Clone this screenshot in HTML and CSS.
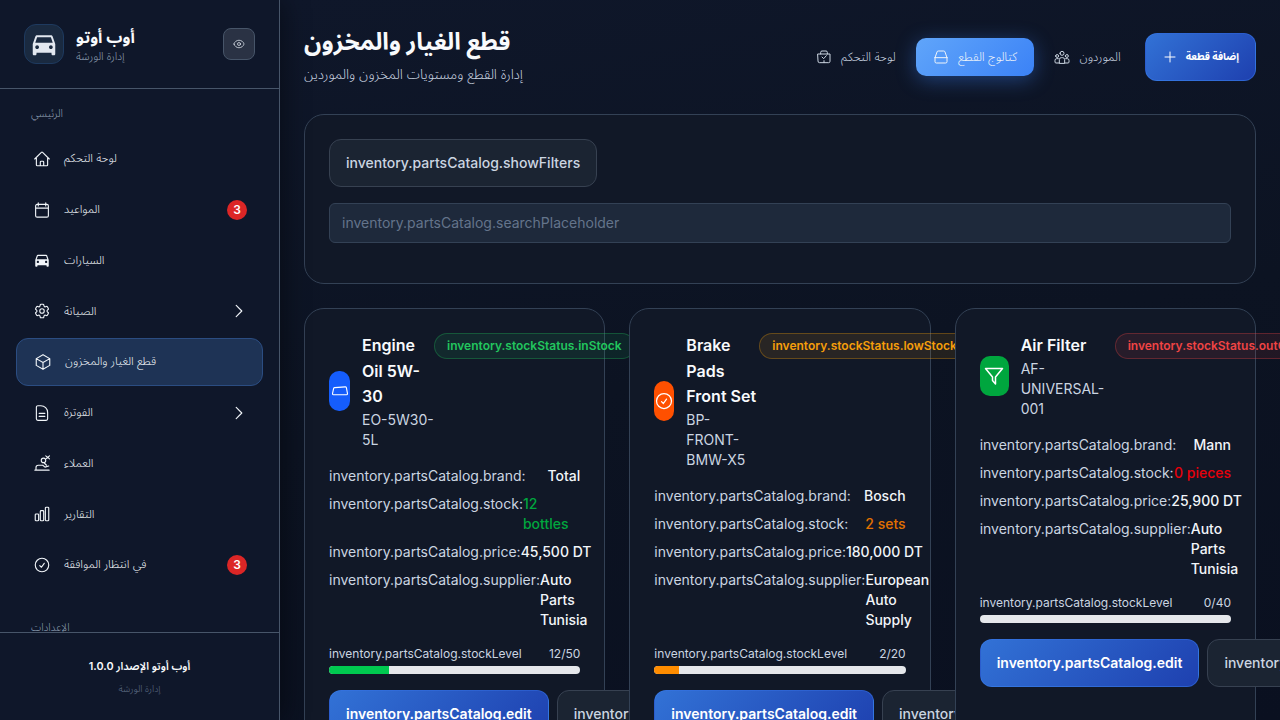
FILE: index.html
```html
<!DOCTYPE html>
<html lang="ar">
<head>
  <meta charset="UTF-8">
  <meta name="viewport" content="width=device-width, initial-scale=1.0">
  <title>قطع الغيار والمخزون</title>
  <link rel="stylesheet" href="styles.css">
</head>
<body>
  <svg class="sprite" aria-hidden="true">
    <symbol id="i-home" viewBox="0 0 24 24"><path d="m2.25 12 8.954-8.955c.44-.439 1.152-.439 1.591 0L21.75 12M4.5 9.75v10.125c0 .621.504 1.125 1.125 1.125H9.75v-4.875c0-.621.504-1.125 1.125-1.125h2.25c.621 0 1.125.504 1.125 1.125V21h4.125c.621 0 1.125-.504 1.125-1.125V9.75M8.25 21h8.25"/></symbol>
    <symbol id="i-calendar" viewBox="0 0 24 24"><path d="M7 2.5v4M17 2.5v4M3.5 9.5h17M5.5 4.5h13a2 2 0 0 1 2 2v13a2 2 0 0 1-2 2h-13a2 2 0 0 1-2-2v-13a2 2 0 0 1 2-2Z"/></symbol>
    <symbol id="i-car" viewBox="0 0 24 24"><path class="solid" d="M18.92 6.01C18.72 5.42 18.16 5 17.5 5h-11c-.66 0-1.21.42-1.42 1.01L3 12v8c0 .55.45 1 1 1h1c.55 0 1-.45 1-1v-1h12v1c0 .55.45 1 1 1h1c.55 0 1-.45 1-1v-8l-2.08-5.99zM6.5 16c-.83 0-1.5-.67-1.5-1.5S5.67 13 6.5 13s1.5.67 1.5 1.5S7.33 16 6.5 16zm11 0c-.83 0-1.5-.67-1.5-1.5s.67-1.5 1.5-1.5 1.5.67 1.5 1.5-.67 1.5-1.5 1.5zM5 11l1.5-4.5h11L19 11H5z"/></symbol>
    <symbol id="i-gear" viewBox="0 0 24 24"><path d="M9.594 3.94c.09-.542.56-.94 1.11-.94h2.593c.55 0 1.02.398 1.11.94l.213 1.281c.063.374.313.686.645.87.074.04.147.083.22.127.325.196.72.257 1.075.124l1.217-.456a1.125 1.125 0 0 1 1.37.49l1.296 2.247a1.125 1.125 0 0 1-.26 1.431l-1.003.827c-.293.241-.438.613-.43.992a7.723 7.723 0 0 1 0 .255c-.008.378.137.75.43.991l1.004.827c.424.35.534.955.26 1.43l-1.298 2.247a1.125 1.125 0 0 1-1.369.491l-1.217-.456c-.355-.133-.75-.072-1.076.124a6.47 6.47 0 0 1-.22.128c-.331.183-.581.495-.644.869l-.213 1.281c-.09.543-.56.94-1.11.94h-2.594c-.55 0-1.019-.398-1.11-.94l-.213-1.281c-.062-.374-.312-.686-.644-.87a6.52 6.52 0 0 1-.22-.127c-.325-.196-.72-.257-1.076-.124l-1.217.456a1.125 1.125 0 0 1-1.369-.49l-1.297-2.247a1.125 1.125 0 0 1 .26-1.431l1.004-.827c.292-.24.437-.613.43-.991a6.932 6.932 0 0 1 0-.255c.007-.38-.138-.751-.43-.992l-1.004-.827a1.125 1.125 0 0 1-.26-1.43l1.297-2.247a1.125 1.125 0 0 1 1.37-.491l1.216.456c.356.133.751.072 1.076-.124.072-.044.146-.086.22-.128.332-.183.582-.495.644-.869l.214-1.28Z"/><path d="M15 12a3 3 0 1 1-6 0 3 3 0 0 1 6 0Z"/></symbol>
    <symbol id="i-cube" viewBox="0 0 24 24"><path d="m21 7.5-9-5.25L3 7.5m18 0-9 5.25m9-5.25v9l-9 5.25M3 7.5l9 5.25M3 7.5v9l9 5.25m0-9v9"/></symbol>
    <symbol id="i-doc" viewBox="0 0 24 24"><path d="M8.25 12.5h7.5m-7.5 4h7.5M10.5 2.25H6.5a2 2 0 0 0-2 2v15.5a2 2 0 0 0 2 2h11a2 2 0 0 0 2-2v-8.5a9 9 0 0 0-9-9Z"/></symbol>
    <symbol id="i-clients" viewBox="0 0 24 24"><path d="M2.5 21.5h19M4 21.5v-3.5a3 3 0 0 1 3-3h6l3 2.500 5-1.500M11 8.500a3 3 0 1 1 6 0 3 3 0 0 1-6 0ZM15 12l3 3M17 2.500l5 4M22 2.500l-4 3.500"/></symbol>
    <symbol id="i-chart" viewBox="0 0 24 24"><path d="M3 13.125C3 12.504 3.504 12 4.125 12h2.25c.621 0 1.125.504 1.125 1.125v6.75C7.5 20.496 6.996 21 6.375 21h-2.25A1.125 1.125 0 0 1 3 19.875v-6.75ZM9.750 8.625c0-.621.504-1.125 1.125-1.125h2.250c.621 0 1.125.504 1.125 1.125v11.250c0 .621-.504 1.125-1.125 1.125h-2.250a1.125 1.125 0 0 1-1.125-1.125V8.625ZM16.500 4.125c0-.621.504-1.125 1.125-1.125h2.250C20.496 3 21 3.504 21 4.125v15.750c0 .621-.504 1.125-1.125 1.125h-2.250a1.125 1.125 0 0 1-1.125-1.125V4.125Z"/></symbol>
    <symbol id="i-check" viewBox="0 0 24 24"><path d="M9 12.750 11.250 15 15 9.750M21 12a9 9 0 1 1-18 0 9 9 0 0 1 18 0Z"/></symbol>
    <symbol id="i-chevron" viewBox="0 0 24 24"><path d="m8.250 4.500 7.500 7.500-7.500 7.500"/></symbol>
    <symbol id="i-eye" viewBox="0 0 24 24"><path d="M2.036 12.322a1.012 1.012 0 0 1 0-.639C3.423 7.510 7.360 4.500 12 4.500c4.638 0 8.573 3.007 9.963 7.178.07.207.07.431 0 .639C20.577 16.490 16.640 19.500 12 19.500c-4.638 0-8.573-3.007-9.963-7.178Z"/><path d="M15 12a3 3 0 1 1-6 0 3 3 0 0 1 6 0Z"/></symbol>
    <symbol id="i-plus" viewBox="0 0 24 24"><path d="M12 4.500v15m7.500-7.500h-15"/></symbol>
    <symbol id="i-box" viewBox="0 0 24 24"><path d="M3 13v6a2 2 0 0 0 2 2h14a2 2 0 0 0 2-2v-6M3 13l3-8.500a2 2 0 0 1 2-1.500h8a2 2 0 0 1 2 1.500l3 8.500M3 13h18"/></symbol>
    <symbol id="i-users" viewBox="0 0 24 24"><path d="M9 6.500a3 3 0 1 1 6 0 3 3 0 0 1-6 0ZM2.500 10.500a2.200 2.200 0 1 1 4.400 0 2.200 2.200 0 0 1-4.400 0ZM17.100 10.500a2.200 2.200 0 1 1 4.400 0 2.200 2.200 0 0 1-4.400 0ZM8 21v-5a3 3 0 0 1 3-3h2a3 3 0 0 1 3 3v5ZM8 21H3a1.500 1.500 0 0 1-1.500-1.500V17a2.500 2.500 0 0 1 2.500-2.500h2.500M16 21h5a1.500 1.500 0 0 0 1.500-1.500V17a2.500 2.500 0 0 0-2.500-2.500h-2.500"/></symbol>
    <symbol id="i-panel" viewBox="0 0 24 24"><path d="M3 7.500h18v11a2 2 0 0 1-2 2H5a2 2 0 0 1-2-2ZM7 7.500V5a2 2 0 0 1 2-2h6a2 2 0 0 1 2 2v2.500M9 12l2.500 2.500L15.500 10M12 20.500v-3"/></symbol>
    <symbol id="i-oil" viewBox="0 0 24 24"><path d="M5 7.500 19 6.500a1.500 1.500 0 0 1 1.500 1L22 15.500a1.500 1.500 0 0 1-1.500 1.500h-17A1.500 1.500 0 0 1 2 15.500l1.500-7A1.500 1.500 0 0 1 5 7.500Z"/></symbol>
    <symbol id="i-funnel" viewBox="0 0 24 24"><path d="M3.500 4.500h17l-7 8.500v7l-3-3.500V13Z"/></symbol>
  </svg>

  <div class="app">
    <aside class="sidebar">
      <div class="brand">
        <div class="brand-logo"><svg class="icon"><use href="#i-car"/></svg></div>
        <div class="brand-text">
          <div class="brand-name">أوب أوتو</div>
          <div class="brand-sub">إدارة الورشة</div>
        </div>
        <button class="theme-btn" type="button"><svg class="icon"><use href="#i-eye"/></svg></button>
      </div>

      <nav class="side-nav">
        <div class="nav-label">الرئيسي</div>
        <a class="nav-item"><svg class="icon"><use href="#i-home"/></svg><span>لوحة التحكم</span></a>
        <a class="nav-item"><svg class="icon"><use href="#i-calendar"/></svg><span>المواعيد</span><b class="count">3</b></a>
        <a class="nav-item"><svg class="icon"><use href="#i-car"/></svg><span>السيارات</span></a>
        <a class="nav-item"><svg class="icon"><use href="#i-gear"/></svg><span>الصيانة</span><svg class="icon chevron"><use href="#i-chevron"/></svg></a>
        <a class="nav-item active"><svg class="icon"><use href="#i-cube"/></svg><span>قطع الغيار والمخزون</span></a>
        <a class="nav-item"><svg class="icon"><use href="#i-doc"/></svg><span>الفوترة</span><svg class="icon chevron"><use href="#i-chevron"/></svg></a>
        <a class="nav-item"><svg class="icon"><use href="#i-clients"/></svg><span>العملاء</span></a>
        <a class="nav-item"><svg class="icon"><use href="#i-chart"/></svg><span>التقارير</span></a>
        <a class="nav-item"><svg class="icon"><use href="#i-check"/></svg><span>في انتظار الموافقة</span><b class="count">3</b></a>
        <div class="nav-label second">الإعدادات</div>
      </nav>

      <div class="side-footer">
        <div class="version">أوب أوتو الإصدار 1.0.0</div>
        <div class="version-sub">إدارة الورشة</div>
      </div>
    </aside>

    <main class="main">
      <header class="page-head">
        <div class="page-title">
          <h1>قطع الغيار والمخزون</h1>
          <p>إدارة القطع ومستويات المخزون والموردين</p>
        </div>
        <div class="head-actions">
          <a class="tab"><svg class="icon"><use href="#i-panel"/></svg>لوحة التحكم</a>
          <a class="tab current"><svg class="icon"><use href="#i-box"/></svg>كتالوج القطع</a>
          <a class="tab"><svg class="icon"><use href="#i-users"/></svg>الموردون</a>
          <button class="add-btn" type="button"><svg class="icon"><use href="#i-plus"/></svg>إضافة قطعة</button>
        </div>
      </header>

      <section class="panel filters">
        <button class="btn-ghost" type="button">inventory.partsCatalog.showFilters</button>
        <input class="search" type="text" placeholder="inventory.partsCatalog.searchPlaceholder">
      </section>

      <section class="parts">
        <article class="panel part">
          <div class="part-head">
            <div class="part-title t-oil">
              <div class="part-icon blue"><svg class="icon"><use href="#i-oil"/></svg></div>
              <div class="part-name">
                <h3>Engine Oil 5W-30</h3>
                <div class="sku">EO-5W30-5L</div>
              </div>
            </div>
            <span class="status ok">inventory.stockStatus.inStock</span>
          </div>
          <div class="row"><span>inventory.partsCatalog.brand:</span><strong>Total</strong></div>
          <div class="row"><span>inventory.partsCatalog.stock:</span><em class="green">12 bottles</em></div>
          <div class="row"><span>inventory.partsCatalog.price:</span><strong class="price">45,500 DT</strong></div>
          <div class="row"><span>inventory.partsCatalog.supplier:</span><strong>Auto Parts Tunisia</strong></div>
          <div class="level"><span>inventory.partsCatalog.stockLevel</span><span>12/50</span></div>
          <div class="bar"><div class="fill fill-green" style="width: 24%"></div></div>
          <div class="actions">
            <button class="btn-primary" type="button">inventory.partsCatalog.edit</button>
            <button class="btn-ghost" type="button">inventory.partsCatalog.details</button>
          </div>
        </article>

        <article class="panel part">
          <div class="part-head">
            <div class="part-title t-brake">
              <div class="part-icon orange"><svg class="icon"><use href="#i-check"/></svg></div>
              <div class="part-name">
                <h3>Brake Pads Front Set</h3>
                <div class="sku">BP-FRONT-BMW-X5</div>
              </div>
            </div>
            <span class="status low">inventory.stockStatus.lowStock</span>
          </div>
          <div class="row"><span>inventory.partsCatalog.brand:</span><strong>Bosch</strong></div>
          <div class="row"><span>inventory.partsCatalog.stock:</span><em class="amber">2 sets</em></div>
          <div class="row"><span>inventory.partsCatalog.price:</span><strong class="price">180,000 DT</strong></div>
          <div class="row"><span>inventory.partsCatalog.supplier:</span><strong>European Auto Supply</strong></div>
          <div class="level"><span>inventory.partsCatalog.stockLevel</span><span>2/20</span></div>
          <div class="bar"><div class="fill fill-amber" style="width: 10%"></div></div>
          <div class="actions">
            <button class="btn-primary" type="button">inventory.partsCatalog.edit</button>
            <button class="btn-ghost" type="button">inventory.partsCatalog.details</button>
          </div>
        </article>

        <article class="panel part">
          <div class="part-head">
            <div class="part-title t-filter">
              <div class="part-icon lime"><svg class="icon"><use href="#i-funnel"/></svg></div>
              <div class="part-name">
                <h3>Air Filter</h3>
                <div class="sku">AF-UNIVERSAL-001</div>
              </div>
            </div>
            <span class="status out">inventory.stockStatus.outOfStock</span>
          </div>
          <div class="row"><span>inventory.partsCatalog.brand:</span><strong>Mann</strong></div>
          <div class="row"><span>inventory.partsCatalog.stock:</span><em class="red">0 pieces</em></div>
          <div class="row"><span>inventory.partsCatalog.price:</span><strong class="price">25,900 DT</strong></div>
          <div class="row"><span>inventory.partsCatalog.supplier:</span><strong>Auto Parts Tunisia</strong></div>
          <div class="level"><span>inventory.partsCatalog.stockLevel</span><span>0/40</span></div>
          <div class="bar"><div class="fill" style="width: 0%"></div></div>
          <div class="actions">
            <button class="btn-primary" type="button">inventory.partsCatalog.edit</button>
            <button class="btn-ghost" type="button">inventory.partsCatalog.details</button>
          </div>
        </article>
      </section>
    </main>
  </div>
</body>
</html>
```

FILE: styles.css
```css
* {
  box-sizing: border-box;
}
html, body {
  height: 100%;
}
body {
  margin: 0;
  overflow: hidden;
  font-family: Inter, "Noto Sans Arabic", sans-serif;
  line-height: 1.6;
  color: #f8fafc;
  background: #0f172a;
}
.sprite {
  display: none;
}
.icon {
  width: 18px;
  height: 18px;
  flex: none;
  fill: none;
  stroke: currentColor;
  stroke-width: 1.5;
  stroke-linecap: round;
  stroke-linejoin: round;
}
.solid {
  fill: currentColor;
  stroke: none;
}
.app {
  display: flex;
  height: 720px;
  overflow: hidden;
}

/* Sidebar */
.sidebar {
  width: 280px;
  flex: none;
  display: flex;
  flex-direction: column;
  background: #0f172a;
  border-right: 1px solid #475569;
  box-shadow: 4px 0 24px rgba(0,0,0,0.4);
  z-index: 2;
}
.brand {
  height: 89px;
  flex: none;
  display: flex;
  align-items: center;
  gap: 12px;
  padding: 0 24px;
  border-bottom: 1px solid #475569;
}
.brand-logo {
  width: 40px;
  height: 40px;
  display: flex;
  align-items: center;
  justify-content: center;
  color: #e2e8f0;
  background: #1a2a40;
  border: 1px solid #1e3a5f;
  border-radius: 12px;
}
.brand-logo .icon {
  width: 30px;
  height: 30px;
}
.brand-text {
  flex: 1;
}
.brand-name {
  font-size: 16px;
  font-weight: 700;
  line-height: 24px;
}
.brand-sub {
  font-size: 11px;
  font-weight: 300;
  line-height: 14px;
  color: #94a3b8;
}
.theme-btn {
  width: 32px;
  height: 32px;
  padding: 0;
  display: flex;
  align-items: center;
  justify-content: center;
  color: #e2e8f0;
  background: #2a3244;
  border: 1px solid #475569;
  border-radius: 8px;
}
.theme-btn .icon {
  width: 12px;
  height: 12px;
}
.side-nav {
  flex: 1;
  min-height: 0;
  overflow: hidden;
  padding: 16px;
  display: flex;
  flex-direction: column;
  gap: 2.75px;
}
.nav-label {
  flex: none;
  padding: 0 15px;
  font-size: 10.5px;
  line-height: 18px;
  font-weight: 300;
  color: #94a3b8;
  margin-bottom: 9px;
}
.nav-label.second {
  margin-top: 27px;
}
.nav-item {
  height: 48px;
  flex: none;
  display: flex;
  align-items: center;
  gap: 13px;
  padding: 0 16px 0 17px;
  font-size: 11.6px;
  font-weight: 300;
  color: #f1f5f9;
  border-radius: 12px;
}
.nav-item span {
  flex: 1;
}
.nav-item.active {
  background: #1e3355;
  border: 1px solid #2b4d82;
}
.chevron {
  margin-right: -1px;
}
.count {
  width: 20px;
  height: 20px;
  display: flex;
  align-items: center;
  justify-content: center;
  font-size: 12px;
  font-weight: 600;
  color: #fff;
  background: #dc2626;
  border-radius: 50%;
}
.side-footer {
  height: 88px;
  flex: none;
  padding-top: 24px;
  text-align: center;
  background: #0f172a;
  border-top: 1px solid #475569;
}
.version {
  font-size: 10.8px;
  font-weight: 600;
  line-height: 20px;
}
.version-sub {
  margin-top: 4px;
  font-size: 9.5px;
  font-weight: 300;
  line-height: 16px;
  color: #64748b;
}

/* Main */
.main {
  flex: 1;
  min-width: 0;
  padding: 24px;
  background: linear-gradient(170deg, #0f172a 0%, #0c1322 50%, #0a1020 100%);
}
.page-head {
  height: 65.6px;
  display: flex;
  align-items: center;
  justify-content: space-between;
  margin-bottom: 24px;
}
.page-title {
  align-self: flex-start;
}
.page-head h1 {
  margin: 0;
  font-size: 24px;
  font-weight: 700;
  line-height: 36px;
}
.page-head p {
  margin: 4px 0 0;
  font-size: 13.6px;
  font-weight: 300;
  line-height: 20px;
  color: #cbd5e1;
}
.head-actions {
  display: flex;
  align-items: center;
  gap: 4px;
}
.tab {
  height: 38px;
  display: flex;
  align-items: center;
  gap: 9px;
  padding: 0 16px;
  font-size: 12px;
  font-weight: 300;
  color: #cbd5e1;
  border-radius: 10px;
}
.tab .icon {
  width: 16px;
  height: 16px;
}
.tab.current {
  padding: 0 17.5px;
  font-size: 12.2px;
  color: #f1f5f9;
  background: linear-gradient(135deg, #60a5fa, #3b82f6);
  box-shadow: 0 4px 20px rgba(59,130,246,0.4);
}
.add-btn {
  height: 48px;
  margin-left: 4px;
  display: flex;
  align-items: center;
  gap: 8px;
  padding: 0 16px;
  font-family: inherit;
  font-size: 10.2px;
  font-weight: 700;
  color: #fff;
  background: linear-gradient(135deg, #3272d6, #1e40af);
  border: 1px solid rgba(59,130,246,0.4);
  border-radius: 12px;
}
.add-btn .icon {
  width: 16px;
  height: 16px;
}
.panel {
  background: #111827;
  border: 1px solid #334155;
  border-radius: 20px;
}
.filters {
  display: flex;
  flex-direction: column;
  align-items: flex-start;
  gap: 16px;
  padding: 24px 24px 40.4px;
  margin-bottom: 24px;
}
.btn-ghost {
  height: 48px;
  flex: none;
  padding: 0 16px;
  font-family: inherit;
  font-size: 14px;
  font-weight: 500;
  white-space: nowrap;
  color: #cbd5e1;
  background: #1b2432;
  border: 1px solid #374151;
  border-radius: 12px;
}
.search {
  width: 100%;
  height: 40px;
  padding: 0 12px;
  font-family: inherit;
  font-size: 14px;
  color: #f8fafc;
  background: #1e293b;
  border: 1px solid #334155;
  border-radius: 6px;
}
.search::placeholder {
  color: #64748b;
}

/* Part cards */
.parts {
  display: grid;
  grid-template-columns: repeat(3, 1fr);
  gap: 24px;
}
.part {
  min-width: 0;
  padding: 24px;
  position: relative;
}
.part-head {
  display: flex;
  align-items: flex-start;
  margin-bottom: 16px;
}
.part-title {
  display: flex;
  align-items: center;
  gap: 12px;
  flex: none;
}
.t-oil { width: 105px; }
.t-brake { width: 105px; }
.t-filter { width: 135px; }
.part-icon {
  height: 40px;
  flex: none;
  display: flex;
  align-items: center;
  justify-content: center;
  color: #fff;
  border-radius: 10px;
}
.part-icon.blue { width: 21px; background: #155dfc; }
.part-icon.orange { width: 20px; background: #ff5000; }
.part-icon.lime { width: 29px; background: #00a63e; }
.part-icon.orange .icon { width: 20px; height: 20px; }
.part-icon.lime .icon { width: 24px; height: 24px; }
.part-name {
  flex: 1;
  min-width: 0;
}
.part-name h3 {
  margin: 0;
  font-size: 16px;
  font-weight: 600;
}
.sku {
  font-size: 14px;
  line-height: 20px;
  color: #cbd5e1;
}
.status {
  flex: none;
  height: 26px;
  padding: 0 12px;
  font-size: 12px;
  font-weight: 600;
  line-height: 24px;
  white-space: nowrap;
  border: 1px solid;
  border-radius: 13px;
}
.status.ok {
  color: #22c55e;
  background: rgba(34,197,94,0.1);
  border-color: rgba(34,197,94,0.3);
}
.status.low {
  color: #f59e0b;
  background: rgba(245,158,11,0.1);
  border-color: rgba(245,158,11,0.3);
}
.status.out {
  color: #ef4444;
  background: rgba(239,68,68,0.1);
  border-color: rgba(239,68,68,0.3);
}
.row {
  display: flex;
  justify-content: space-between;
  margin-bottom: 8px;
  font-size: 14px;
  line-height: 20px;
  color: #cbd5e1;
}
.row strong {
  font-weight: 500;
  color: #f1f5f9;
}
.row .price {
  white-space: nowrap;
}
.row em {
  font-style: normal;
  font-weight: 500;
}
.green { color: #00a63e; }
.amber { color: #e17100; }
.red { color: #e7000b; }
.level {
  display: flex;
  justify-content: space-between;
  margin-top: 16px;
  font-size: 12px;
  line-height: 16px;
  color: #cbd5e1;
}
.bar {
  height: 8px;
  margin-top: 4px;
  background: #e5e7eb;
  border-radius: 4px;
  overflow: hidden;
}
.fill {
  height: 100%;
}
.fill-green { background: #00c950; }
.fill-amber { background: #ff8c00; }
.actions {
  display: flex;
  gap: 8px;
  margin-top: 16px;
}
.btn-primary {
  height: 48px;
  flex: none;
  padding: 0 16px;
  font-family: inherit;
  font-size: 14px;
  font-weight: 600;
  white-space: nowrap;
  color: #fff;
  background: linear-gradient(135deg, #3272d6, #1e40af);
  border: 1px solid rgba(59,130,246,0.4);
  border-radius: 12px;
}
```
